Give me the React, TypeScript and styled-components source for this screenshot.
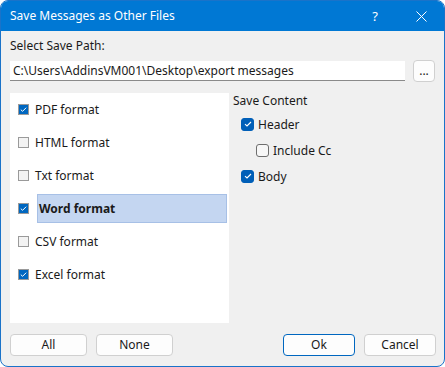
import React, { useState } from 'react';
import styled, { createGlobalStyle } from 'styled-components';

const GlobalStyle = createGlobalStyle`
  html, body {
    margin: 0;
    padding: 0;
    background: #ffffff;
  }
  body {
    font-family: "Noto Sans", "Open Sans", sans-serif;
    font-size: 12px;
    color: #1a1a1a;
  }
`;

const Window = styled.div`
  width: 445px;
  height: 367px;
  box-sizing: border-box;
  border: 1px solid #1a73c9;
  border-radius: 8px;
  background: #f0f0f0;
  overflow: hidden;
  display: flex;
  flex-direction: column;
`;

const TitleBar = styled.div`
  height: 30px;
  flex: none;
  background: #0078d4;
  color: #ffffff;
  display: flex;
  align-items: center;
  padding-left: 9px;
`;

const Title = styled.div`
  flex: 1;
  font-size: 12px;
  line-height: 16px;
`;

const TitleButton = styled.div`
  width: 46px;
  height: 30px;
  display: flex;
  align-items: center;
  justify-content: center;
  font-size: 13px;
`;

const Body = styled.div`
  flex: 1;
  display: flex;
  flex-direction: column;
  padding: 7px 8px 0 8px;
`;

const Label = styled.div`
  line-height: 16px;
  height: 16px;
  padding-left: 1px;
`;

const PathRow = styled.div`
  margin-top: 6px;
  display: flex;
  align-items: center;
  gap: 8px;
  padding-left: 1px;
`;

const PathInput = styled.div`
  width: 395px;
  height: 20px;
  box-sizing: border-box;
  background: #ffffff;
  border-bottom: 1px solid #8a8a8a;
  padding-left: 3px;
  line-height: 20px;
  white-space: nowrap;
  overflow: hidden;
`;

const Button = styled.div<{ $primary?: boolean; $w: number }>`
  width: ${(p) => p.$w}px;
  height: 22px;
  box-sizing: border-box;
  border: 1px solid ${(p) => (p.$primary ? '#0067c0' : '#d0d0d0')};
  border-radius: 4px;
  background: #fdfdfd;
  display: flex;
  align-items: center;
  justify-content: center;
  line-height: 16px;
`;

const Main = styled.div`
  margin-top: 11px;
  display: flex;
  gap: 4px;
`;

const ListPanel = styled.div`
  width: 219px;
  height: 230px;
  margin-left: 1px;
  background: #ffffff;
  display: flex;
  flex-direction: column;
`;

const ListRow = styled.div`
  height: 33px;
  display: flex;
  align-items: center;
  padding-left: 8px;
`;

const ClassicBox = styled.div<{ $checked: boolean }>`
  width: 11px;
  height: 11px;
  box-sizing: border-box;
  border: 1px solid #9a9a9a;
  background: ${(p) => (p.$checked ? '#0067c0' : '#f3f3f3')};
  display: flex;
  align-items: center;
  justify-content: center;
  flex: none;
`;

const ItemText = styled.div<{ $selected: boolean }>`
  margin-left: ${(p) => (p.$selected ? '8px' : '6px')};
  line-height: 16px;
  ${(p) =>
    p.$selected &&
    `
    font-weight: bold;
    background: #c4d6f1;
    border: 1px solid #a7c0e6;
    width: 190px;
    height: 29px;
    box-sizing: border-box;
    display: flex;
    align-items: center;
    padding-left: 1px;
  `}
`;

const ContentPane = styled.div`
  display: flex;
  flex-direction: column;
`;

const PaneLabel = styled.div`
  line-height: 16px;
  height: 16px;
  margin-bottom: 2px;
`;

const OptRow = styled.div<{ $indent: number }>`
  height: 26px;
  display: flex;
  align-items: center;
  padding-left: ${(p) => p.$indent}px;
  gap: 4px;
`;

const ModernBox = styled.div<{ $checked: boolean }>`
  width: 13px;
  height: 13px;
  box-sizing: border-box;
  border-radius: 3px;
  border: 1px solid ${(p) => (p.$checked ? '#005fb8' : '#6e6e6e')};
  background: ${(p) => (p.$checked ? '#005fb8' : '#f7f7f7')};
  display: flex;
  align-items: center;
  justify-content: center;
`;

const Footer = styled.div`
  margin-top: 11px;
  display: flex;
  align-items: center;
  gap: 9px;
  padding-left: 1px;
`;

const Spacer = styled.div`
  flex: 1;
`;

const Check = ({ size }: { size: number }) => (
  <svg width={size} height={size} viewBox="0 0 10 10">
    <polyline points="2,5.2 4,7 8,3" fill="none" stroke="#ffffff" strokeWidth="1.1" />
  </svg>
);

const formats = [
  { name: 'PDF format', checked: true },
  { name: 'HTML format', checked: false },
  { name: 'Txt format', checked: false },
  { name: 'Word format', checked: true },
  { name: 'CSV format', checked: false },
  { name: 'Excel format', checked: true },
];

const App = () => {
  const [selected] = useState(3);

  return (
    <>
      <GlobalStyle />
      <Window>
        <TitleBar>
          <Title>Save Messages as Other Files</Title>
          <TitleButton>?</TitleButton>
          <TitleButton>
            <svg width="11" height="11" viewBox="0 0 11 11">
              <path d="M0.5 0.5 L10.5 10.5 M10.5 0.5 L0.5 10.5" stroke="#ffffff" strokeWidth="1" />
            </svg>
          </TitleButton>
        </TitleBar>
        <Body>
          <Label>Select Save Path:</Label>
          <PathRow>
            <PathInput>C:\Users\AddinsVM001\Desktop\export messages</PathInput>
            <Button $w={22}>...</Button>
          </PathRow>
          <Main>
            <ListPanel>
              {formats.map((f, i) => (
                <ListRow key={f.name}>
                  <ClassicBox $checked={f.checked}>{f.checked && <Check size={9} />}</ClassicBox>
                  <ItemText $selected={i === selected}>{f.name}</ItemText>
                </ListRow>
              ))}
            </ListPanel>
            <ContentPane>
              <PaneLabel>Save Content</PaneLabel>
              <OptRow $indent={8}>
                <ModernBox $checked>
                  <Check size={10} />
                </ModernBox>
                Header
              </OptRow>
              <OptRow $indent={23}>
                <ModernBox $checked={false} />
                Include Cc
              </OptRow>
              <OptRow $indent={8}>
                <ModernBox $checked>
                  <Check size={10} />
                </ModernBox>
                Body
              </OptRow>
            </ContentPane>
          </Main>
          <Footer>
            <Button $w={77}>All</Button>
            <Button $w={77}>None</Button>
            <Spacer />
            <Button $w={72} $primary>
              Ok
            </Button>
            <Button $w={72}>Cancel</Button>
          </Footer>
        </Body>
      </Window>
    </>
  );
};

export default App;
